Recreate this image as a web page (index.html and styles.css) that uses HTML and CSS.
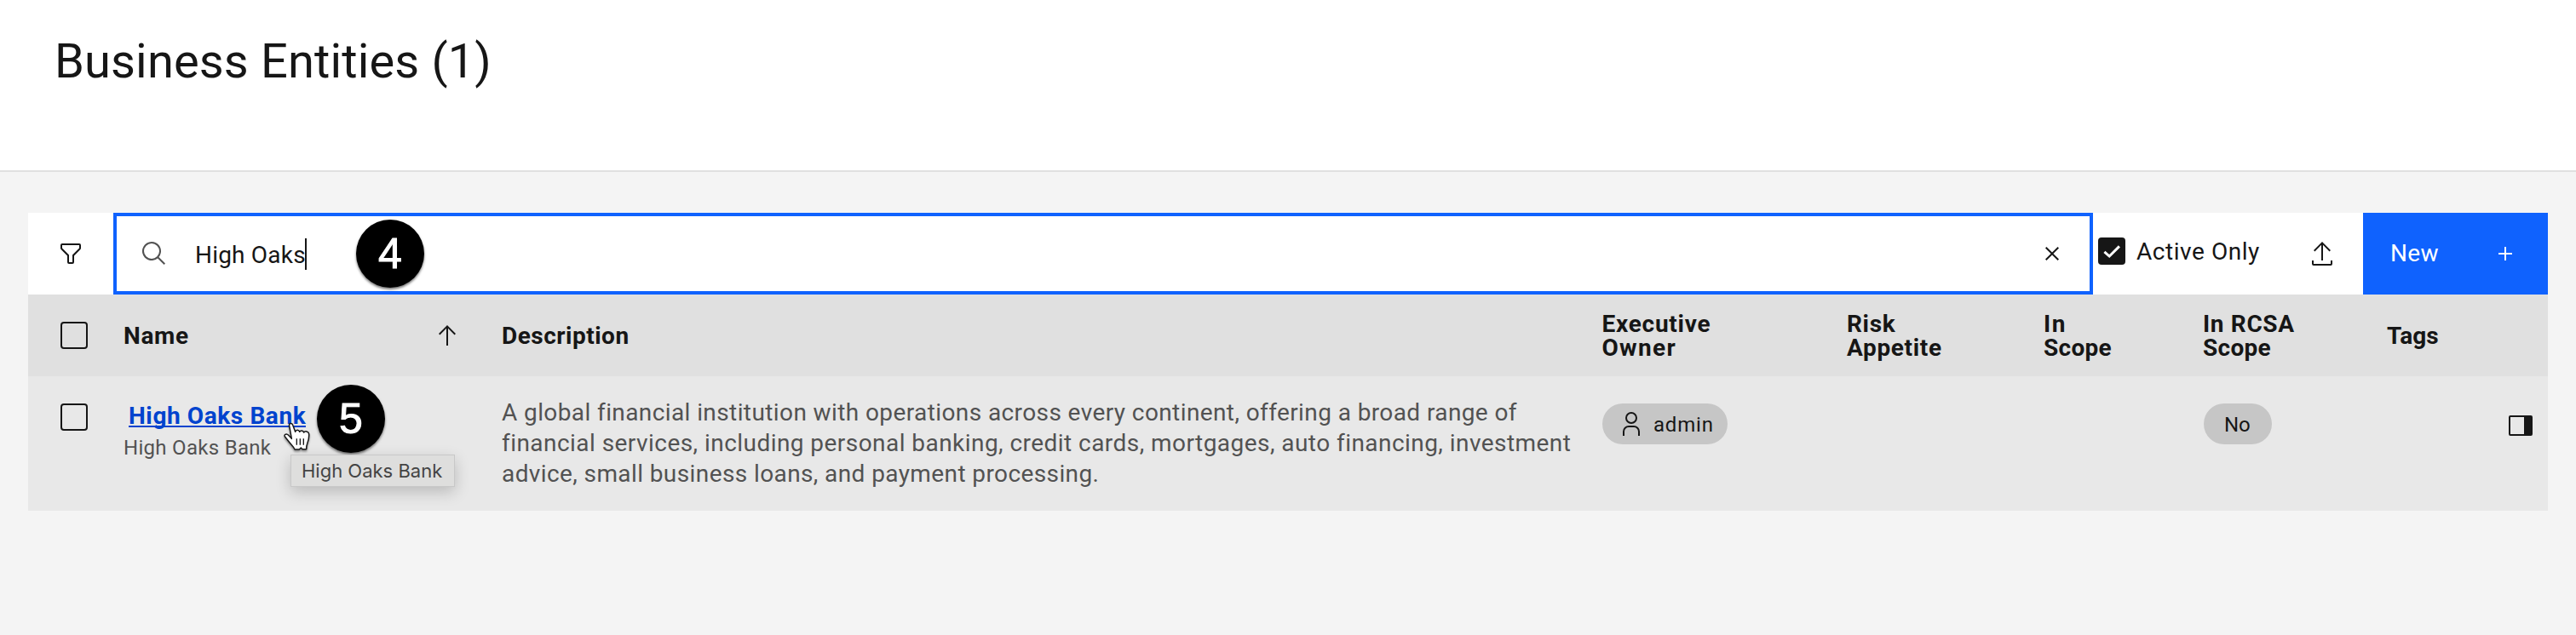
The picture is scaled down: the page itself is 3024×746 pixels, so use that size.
FILE: index.html
```html
<!DOCTYPE html>
<html lang="en">
<head>
<meta charset="utf-8">
<title>Business Entities</title>
<link rel="stylesheet" href="styles.css">
</head>
<body>
<header class="page-header"><h1 class="page-title">Business Entities (1)</h1></header>
<main class="content">
  <div class="toolbar">
    <button class="filter" aria-label="Filter"><svg class="icon" viewBox="0 0 32 32"><path d="M18,28H14a2,2,0,0,1-2-2V18.41L4.59,11A2,2,0,0,1,4,9.59V6A2,2,0,0,1,6,4H26a2,2,0,0,1,2,2V9.59A2,2,0,0,1,27.41,11L20,18.41V26A2,2,0,0,1,18,28ZM6,6V9.59l8,8V26h4V17.59l8-8V6Z"/></svg></button>
    <div class="search">
      <svg class="icon icon-muted" viewBox="0 0 32 32"><path d="M29,27.5859l-7.5521-7.5521a11.0177,11.0177,0,1,0-1.4141,1.4141L27.5859,29ZM4,13a9,9,0,1,1,9,9A9.01,9.01,0,0,1,4,13Z"/></svg>
      <span class="search-text">High Oaks</span><span class="caret"></span>
      <svg class="icon search-clear" viewBox="0 0 32 32"><polygon points="17.41 16 24 9.41 22.59 8 16 14.59 9.41 8 8 9.41 14.59 16 8 22.59 9.41 24 16 17.41 22.59 24 24 22.59"/></svg>
      <span class="step step-search">4</span>
    </div>
    <label class="active-only">
      <span class="checkbox checked"><svg class="tick" viewBox="0 0 32 32"><polyline points="7.4,16.8 13.2,22 24.9,10.4"/></svg></span>
      <span class="active-label">Active Only</span>
    </label>
    <button class="export" aria-label="Export"><svg class="icon" viewBox="0 0 32 32"><path d="M6 12 7.41 13.41 15 5.83V24h2V5.83l7.59 7.58L26 12 16 2ZM26 24v4H6v-4H4v4a2 2 0 0 0 2 2h20a2 2 0 0 0 2-2v-4Z"/></svg></button>
    <button class="new"><span>New</span><svg class="icon" viewBox="0 0 32 32"><path d="M17 15V8h-2v7H8v2h7v7h2v-7h7v-2Z"/></svg></button>
  </div>
  <div class="row head">
    <div class="select"><span class="checkbox"></span></div>
    <div class="name-head"><span class="label">Name</span><svg class="icon" viewBox="0 0 32 32"><path d="M16 4 6 14l1.41 1.41L15 7.83V28h2V7.83l7.59 7.58L26 14Z"/></svg></div>
    <div class="label description-head">Description</div>
    <div class="label"><span class="executive">Executive</span><br><span class="owner">Owner</span></div>
    <div class="label">Risk<br>Appetite</div>
    <div class="label shifted"><span class="in">In</span><br><span class="scope">Scope</span></div>
    <div class="label shifted">In RCSA<br><span class="scope">Scope</span></div>
    <div class="label tags">Tags</div>
  </div>
  <div class="row body">
    <div class="select"><span class="checkbox"></span></div>
    <div class="name-cell">
      <a class="entity-link">High Oaks Bank</a>
      <div class="entity-sub">High Oaks Bank</div>
      <span class="step step-row">5</span>
      <span class="tooltip">High Oaks Bank</span>
      <svg class="cursor" viewBox="0 0 180 150"><path class="hand" d="M59 31C56 21 68 19 71 28L80 52C82 44 93 44 95 52C98 46 108 46 110 54C114 48 127 50 128 59C129 70 126 84 122 94C119 101 119 106 119 113L105 113L100 108L94 114L78 114C74 104 66 98 60 90L44 70C38 62 48 56 56 64L67 76Z"/><path class="creases" d="M85 76V98M97 76V98M109 76V98"/></svg>
    </div>
    <div class="description"><span class="line-a">A global financial institution with operations across every continent, offering a broad range of</span><br><span class="line-b">financial services, including personal banking, credit cards, mortgages, auto financing, investment</span><br><span class="line-c">advice, small business loans, and payment processing.</span></div>
    <div class="pill-cell"><span class="pill owner-pill"><svg class="icon" viewBox="0 0 32 32"><path d="M16,4a5,5,0,1,1-5,5,5,5,0,0,1,5-5m0-2a7,7,0,1,0,7,7A7,7,0,0,0,16,2Z"/><path d="M26,30H24V25a5,5,0,0,0-5-5H13a5,5,0,0,0-5,5v5H6V25a7,7,0,0,1,7-7h6a7,7,0,0,1,7,7Z"/></svg><span class="admin">admin</span></span></div>
    <div></div>
    <div></div>
    <div class="pill-cell"><span class="pill no-pill">No</span></div>
    <div class="panel-cell"><svg class="icon" viewBox="0 0 32 32"><path fill-rule="evenodd" d="M4 4h24a2 2 0 0 1 2 2v20a2 2 0 0 1-2 2H4a2 2 0 0 1-2-2V6a2 2 0 0 1 2-2ZM4 6v20h16V6Z"/></svg></div>
  </div>
</main>
</body>
</html>
```
FILE: styles.css
```css
* { box-sizing: border-box; }
body {
  margin: 0;
  min-height: 746px;
  background: #f4f4f4;
  color: #161616;
  font: 28px/36px Roboto, "Liberation Sans", sans-serif;
}
button {
  margin: 0;
  border: 0;
  background: none;
  color: inherit;
  font: inherit;
}
.page-header {
  height: 202px;
  padding: 36px 64px 0;
  background: #fff;
  border-bottom: 2px solid #e0e0e0;
}
.page-title {
  margin: 0;
  font-size: 56px;
  font-weight: 400;
  line-height: 72px;
  letter-spacing: 0.15px;
}
.content { padding: 48px 33px 0; }
.icon {
  display: block;
  flex: none;
  width: 32px;
  height: 32px;
  fill: currentColor;
}
.icon-muted { fill: #525252; }
.toolbar {
  display: flex;
  height: 96px;
  background: #fff;
}
.filter { width: 100px; padding: 0 34px; }
.search {
  position: relative;
  display: flex;
  align-items: center;
  width: 2324px;
  padding: 0 28px;
  border: 4px solid #0f62fe;
}
.search-text {
  width: 129px;
  margin-left: 32px;
  padding-top: 3px;
  letter-spacing: 0.2px;
  white-space: nowrap;
}
.caret { width: 2px; height: 37px; background: #161616; }
.search-clear { margin-left: auto; }
.active-only {
  display: flex;
  align-items: center;
  gap: 13px;
  width: 247px;
  margin-left: 6px;
  padding-bottom: 6px;
}
.active-label { padding-top: 1px; letter-spacing: 0.55px; white-space: nowrap; }
.checkbox {
  display: block;
  flex: none;
  width: 32px;
  height: 32px;
  border: 2px solid #161616;
  border-radius: 4px;
}
.checked { border: 0; background: #161616; }
.tick {
  display: block;
  fill: none;
  stroke: #fff;
  stroke-width: 3;
}
.export { width: 64px; padding: 0; }
.new {
  display: flex;
  align-items: center;
  justify-content: space-between;
  width: 217px;
  padding: 0 34px 0 32px;
  background: #0f62fe;
  color: #fff;
  letter-spacing: 0.4px;
}
.row {
  display: grid;
  grid-template-columns: 112px 443px 1292.5px 287.5px 230px 187px 217px 189px;
}
.head {
  align-items: center;
  height: 96px;
  background: #e0e0e0;
  font-weight: 700;
  line-height: 28px;
  letter-spacing: 0.65px;
}
.label { padding-top: 1px; }
.shifted { padding-left: 1px; }
.description-head { padding-left: 1px; letter-spacing: 0.5px; }
.body { height: 158px; background: #e8e8e8; }
.select { padding-left: 38px; }
.body .select { padding-top: 32px; }
.name-head {
  display: flex;
  align-items: center;
  justify-content: space-between;
  padding-right: 47px;
}
.executive { letter-spacing: 0.75px; }
.owner { letter-spacing: 1.3px; }
.in { letter-spacing: 1.5px; }
.scope { letter-spacing: 0.3px; }
.tags { letter-spacing: 0; }
.name-cell { position: relative; padding-top: 29px; }
.entity-link {
  display: block;
  width: 208px;
  height: 31px;
  margin-left: 6px;
  border-bottom: 2px solid #0043ce;
  color: #0043ce;
  font-weight: 700;
  letter-spacing: 0.6px;
  white-space: nowrap;
}
.entity-sub {
  margin-top: 8px;
  color: #525252;
  font-size: 24px;
  line-height: 32px;
  letter-spacing: 0.3px;
}
.step {
  position: absolute;
  width: 80px;
  height: 80px;
  border-radius: 50%;
  background: #000;
  box-shadow: 0 2px 3px rgba(0, 0, 0, 0.55);
  color: #fff;
  font: 50px/80px "Liberation Sans", sans-serif;
  -webkit-text-stroke: 1px #fff;
  text-align: center;
}
.step-search { left: 281px; top: 4px; }
.step-row { left: 227px; top: 10px; }
.tooltip {
  position: absolute;
  left: 196px;
  top: 92px;
  width: 193px;
  height: 38px;
  padding-left: 12px;
  border: 1px solid #c8c8c8;
  background: #dededd;
  box-shadow: 0 6px 18px rgba(0, 0, 0, 0.2);
  color: #444;
  font: 22px/36px Inter, sans-serif;
  white-space: nowrap;
}
.cursor {
  position: absolute;
  left: 175px;
  top: 48px;
  width: 60px;
  height: 50px;
  filter: drop-shadow(0 2px 1px rgba(0, 0, 0, 0.4));
}
.hand { fill: #fff; stroke: #161616; stroke-width: 4.5; stroke-linejoin: round; }
.creases { fill: none; stroke: #161616; stroke-width: 4; }
.description {
  padding: 25px 0 0 1px;
  color: #525252;
  white-space: nowrap;
}
.line-a { letter-spacing: 0.4px; }
.line-b { letter-spacing: 0.45px; }
.line-c { letter-spacing: 0.4px; }
.pill-cell { padding-top: 32px; }
.pill {
  display: flex;
  align-items: center;
  height: 48px;
  padding-top: 1px;
  border-radius: 24px;
  background: #c6c6c6;
  font-size: 24px;
  line-height: 32px;
}
.owner-pill { gap: 10px; width: 147px; margin-left: 0.5px; padding: 0 0 0 18px; }
.admin { padding-top: 1px; letter-spacing: 0.8px; }
.no-pill { width: 80px; margin-left: 2px; padding-left: 24px; }
.panel-cell { padding: 42px 0 0 141px; }
```
